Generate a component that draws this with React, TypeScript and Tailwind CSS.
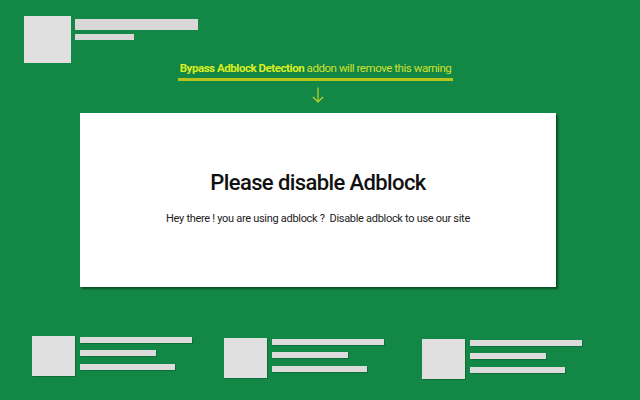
import React from 'react';

const items = [
    { id: 1, left: 'ml-[32px]', top: 'mt-[49px]' },
    { id: 2, left: 'ml-[32px]', top: 'mt-[51px]' },
    { id: 3, left: 'ml-[38px]', top: 'mt-[52px]' },
];

function Placeholder({ left, top }: { left: string; top: string }) {
    return (
        <div className={`flex gap-[5px] ${left} ${top}`}>
            <div className="w-[43px] h-[40px] bg-[#e0e0e0] shadow-[1px_1px_0_rgba(0,0,0,0.2)]"></div>
            <div className="flex flex-col pt-[1px]">
                <div className="w-[112px] h-[6px] bg-[#dcdcdc] shadow-[1px_1px_0_rgba(0,0,0,0.2)]"></div>
                <div className="w-[76px] h-[6px] mt-[7px] bg-[#dcdcdc] shadow-[1px_1px_0_rgba(0,0,0,0.2)]"></div>
                <div className="w-[95px] h-[6px] mt-[8px] bg-[#dcdcdc] shadow-[1px_1px_0_rgba(0,0,0,0.2)]"></div>
            </div>
        </div>
    );
}

export default function App() {
    return (
        <div className="w-[640px] h-[400px] overflow-hidden bg-[#138846] flex flex-col" style={{ fontFamily: 'Roboto, "Liberation Sans", sans-serif' }}>
            {/* Header placeholder */}
            <div className="flex gap-[4px] pl-[24px] pt-[16px]">
                <div className="w-[47px] h-[47px] bg-[#e0e0e0]"></div>
                <div className="flex flex-col pt-[3px]">
                    <div className="w-[123px] h-[11px] bg-[#d8d8d8]"></div>
                    <div className="w-[59px] h-[6px] mt-[4px] bg-[#d8d8d8]"></div>
                </div>
            </div>

            {/* Addon banner */}
            <div className="flex flex-col items-center -mt-[3px] ml-[-9px]">
                <p className="text-[11.5px] leading-[16px] tracking-[-0.45px] text-[#cfe12a] whitespace-nowrap">
                    <span className="font-bold text-[#dcef1e]">Bypass Adblock Detection</span> addon will remove this warning
                </p>
                <div className="w-[275px] h-[3px] mt-[2px] bg-[#b9c41a]"></div>
                <svg className="mt-[6px] ml-[5px]" width="12" height="16" viewBox="0 0 12 16" fill="none" stroke="#c4d52a" strokeWidth="1.2">
                    <path d="M6 0.5 V15" />
                    <path d="M1 10 L6 15 L11 10" />
                </svg>
            </div>

            {/* Warning card */}
            <div className="ml-[80px] mt-[10px] w-[476px] h-[174px] bg-white shadow-[2px_2px_2px_rgba(0,0,0,0.45)] flex flex-col items-center pt-[56px]">
                <h1 className="text-[22px] leading-[28px] font-medium tracking-[-0.6px] text-[#111]">Please disable Adblock</h1>
                <p className="mt-[15px] text-[11px] leading-[14px] tracking-[-0.3px] text-[#222] whitespace-pre">Hey there ! you are using adblock ?  Disable adblock to use our site</p>
            </div>

            {/* Bottom placeholders */}
            <div className="flex items-start">
                {items.map(item => (
                    <Placeholder key={item.id} left={item.left} top={item.top} />
                ))}
            </div>
        </div>
    );
}
